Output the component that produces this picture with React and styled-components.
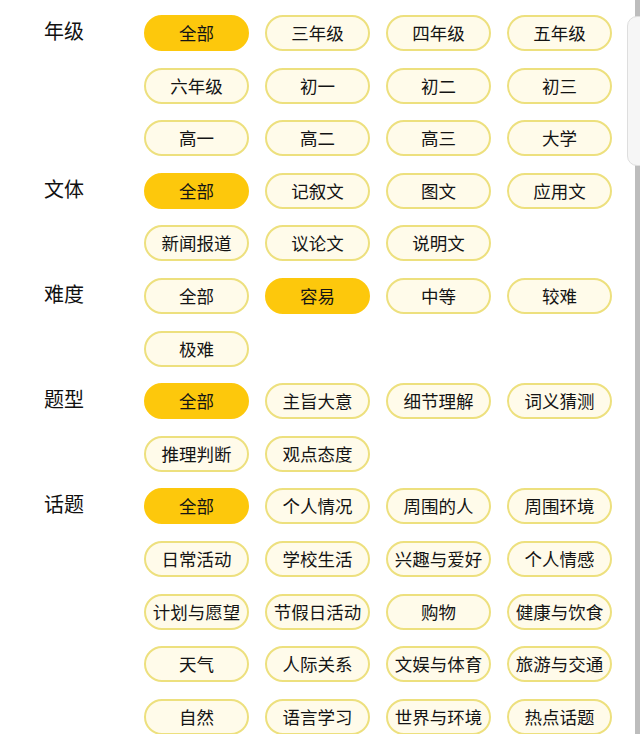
import React from "react"
import styled, { createGlobalStyle } from "styled-components"

const Global = createGlobalStyle`
  html, body {
    margin: 0;
    padding: 0;
    background: #ffffff;
  }
  body {
    font-family: "Noto Sans CJK SC", "Noto Sans", sans-serif;
    color: #1e1e1e;
  }
`;

const Page = styled("div")`
  position: relative;
  width: 640px;
  height: 734px;
  overflow: hidden;
  background: #ffffff;
  padding-top: 15px;
  box-sizing: border-box;
  display: flex;
  flex-direction: column;
  gap: 16.6px;`;

const Section = styled("div")`
  display: flex;
  align-items: flex-start;`;

const Label = styled("div")`
  width: 144px;
  padding-left: 44px;
  box-sizing: border-box;
  font-size: 20px;
  line-height: 32px;
  color: #111111;
  flex-shrink: 0;`;

const Grid = styled("div")`
  display: grid;
  grid-template-columns: repeat(4, 105px);
  column-gap: 16px;
  row-gap: 16.6px;`;

const Pill = styled("div")`
  height: 36px;
  box-sizing: border-box;
  border-radius: 18px;
  display: flex;
  align-items: center;
  justify-content: center;
  padding-bottom: 1px;
  font-size: 17.5px;
  color: #141414;
  white-space: nowrap;
  background: ${p => (p.$active ? "#fdc80c" : "#fffbea")};
  border: 2px solid ${p => (p.$active ? "#fdc80c" : "#ede07e")};`;

const EdgeStrip = styled("div")`
  position: absolute;
  top: 0;
  right: 0;
  width: 5px;
  height: 100%;
  background: #bdbdbd;`;

const EdgeHandle = styled("div")`
  position: absolute;
  top: 16px;
  left: 627px;
  width: 24px;
  height: 150px;
  border-radius: 10px;
  background: #f6f6f6;
  border: 1px solid #dedede;
  box-sizing: border-box;`;

const sections = [
  { label: "年级", active: 0, items: ["全部", "三年级", "四年级", "五年级", "六年级", "初一", "初二", "初三", "高一", "高二", "高三", "大学"] },
  { label: "文体", active: 0, items: ["全部", "记叙文", "图文", "应用文", "新闻报道", "议论文", "说明文"] },
  { label: "难度", active: 1, items: ["全部", "容易", "中等", "较难", "极难"] },
  { label: "题型", active: 0, items: ["全部", "主旨大意", "细节理解", "词义猜测", "推理判断", "观点态度"] },
  { label: "话题", active: 0, items: ["全部", "个人情况", "周围的人", "周围环境", "日常活动", "学校生活", "兴趣与爱好", "个人情感", "计划与愿望", "节假日活动", "购物", "健康与饮食", "天气", "人际关系", "文娱与体育", "旅游与交通", "自然", "语言学习", "世界与环境", "热点话题"] },
]

export default function App() {
  return (
    <Page>
      <Global />
      {sections.map(s => (
        <Section key={s.label}>
          <Label>{s.label}</Label>
          <Grid>
            {s.items.map((item, i) => (
              <Pill key={item + i} $active={i === s.active}>{item}</Pill>
            ))}
          </Grid>
        </Section>
      ))}
      <EdgeStrip />
      <EdgeHandle />
    </Page>
  )
}
